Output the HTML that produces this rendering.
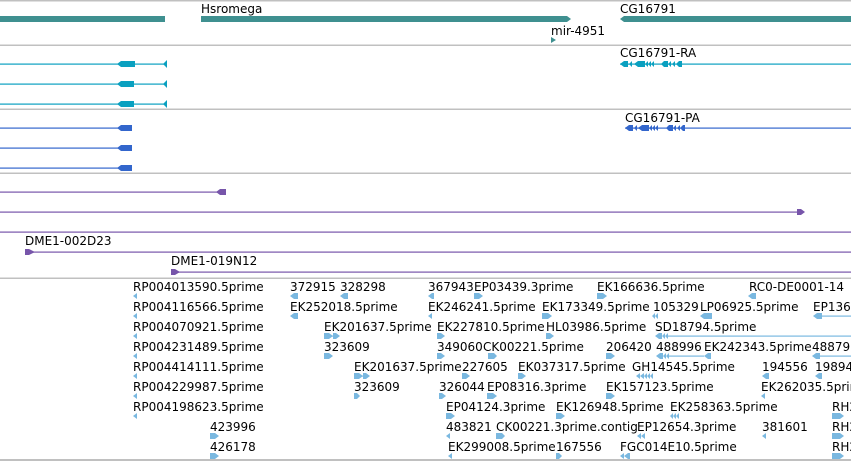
<!DOCTYPE html>
<html><head><meta charset="utf-8"><style>
html,body{margin:0;padding:0;background:#fff;width:851px;height:461px;overflow:hidden}
svg{display:block}
text{font-family:"DejaVu Sans","Liberation Sans",sans-serif;font-size:12px;fill:#000}
.e{fill:#7ab8e0}
</style></head><body>
<svg width="851" height="461" viewBox="0 0 851 461">
<g fill="#c0c0c0">
<rect x="0" y="0" width="851" height="1.5"/>
<rect x="0" y="44.5" width="851" height="1.5"/>
<rect x="0" y="108.5" width="851" height="1.5"/>
<rect x="0" y="172.5" width="851" height="1.5"/>
<rect x="0" y="277.5" width="851" height="1.5"/>
<rect x="0" y="459" width="851" height="2"/>
</g>
<g fill="#3f9090">
<rect x="0" y="16" width="165" height="6"/>
<path d="M201 16H567L571 19L567 22H201Z"/>
<path d="M624 16H851V22H624L620 19Z"/>
<path d="M551 37L556 40L551 43Z"/>
</g>
<text x="201" y="13">Hsromega</text>
<text x="620" y="13">CG16791</text>
<text x="551" y="35">mir-4951</text>
<g fill="#0aa0c0">
<rect x="0" y="63.5" width="167" height="1.2"/><rect x="0" y="83.5" width="167" height="1.2"/><rect x="0" y="103.5" width="167" height="1.2"/>
<path d="M117 64L121 61H135V67H121Z"/><path d="M117 84L121 81H134V87H121Z"/><path d="M117 104L121 101H134V107H121Z"/>
<path d="M163 64L167 60V68Z"/><path d="M163 84L167 80V88Z"/><path d="M163 104L167 100V108Z"/>
<rect x="620" y="63.5" width="231" height="1.2"/>
<path d="M620 64L624 61H628V67H624Z M629 64L632 61V67Z M634 64L638 61H645V67H638Z M645 64L648 61V67Z M648 64L651 61V67Z M651 64L654 61V67Z M661 64L664 61H668V67H664Z M668 64L671 61V67Z M672 64L675 61V67Z M676 64L679 61H682V67H679Z"/>
</g>
<text x="620" y="57">CG16791-RA</text>
<g fill="#3366cc">
<rect x="0" y="127.5" width="132" height="1.2"/><rect x="0" y="147.5" width="132" height="1.2"/><rect x="0" y="167.5" width="132" height="1.2"/>
<path d="M117 128L121 125H132V131H121Z"/><path d="M117 148L121 145H132V151H121Z"/><path d="M117 168L121 165H132V171H121Z"/>
<rect x="625" y="127.5" width="226" height="1.2"/>
<path d="M625 128L629 125H633V131H629Z M634 128L637 125V131Z M638 128L642 125H649V131H642Z M649 128L652 125V131Z M652 128L655 125V131Z M655 128L658 125V131Z M666 128L669 125H673V131H669Z M673 128L676 125V131Z M677 128L680 125V131Z M680 128L683 125H685V131H683Z"/>
</g>
<text x="625" y="122">CG16791-PA</text>
<g fill="#7755aa">
<rect x="0" y="191.5" width="220" height="1.2"/><path d="M216 192L220 189H226V195H220Z"/>
<rect x="0" y="211.5" width="800" height="1.2"/><path d="M797 209H801L805 212L801 215H797Z"/>
<rect x="0" y="231.5" width="851" height="1.2"/>
<rect x="30" y="251.5" width="821" height="1.2"/><path d="M25 249H29L35 252L29 255H25Z"/>
<rect x="176" y="271.5" width="675" height="1.2"/><path d="M171 269H175L180 272L175 275H171Z"/>
</g>
<text x="25" y="245">DME1-002D23</text>
<text x="171" y="265">DME1-019N12</text>
<g>
<text x="133" y="291">RP004013590.5prime</text><text x="290" y="291">372915</text><text x="340" y="291">328298</text><text x="428" y="291">367943</text><text x="474" y="291">EP03439.3prime</text><text x="597" y="291">EK166636.5prime</text><text x="749" y="291">RC0-DE0001-14</text>
<text x="133" y="311">RP004116566.5prime</text><text x="290" y="311">EK252018.5prime</text><text x="428" y="311">EK246241.5prime</text><text x="542" y="311">EK173349.5prime</text><text x="653" y="311">105329</text><text x="700" y="311">LP06925.5prime</text><text x="813" y="311">EP136</text>
<text x="133" y="331">RP004070921.5prime</text><text x="324" y="331">EK201637.5prime</text><text x="437" y="331">EK227810.5prime</text><text x="546" y="331">HL03986.5prime</text><text x="655" y="331">SD18794.5prime</text>
<text x="133" y="351">RP004231489.5prime</text><text x="324" y="351">323609</text><text x="437" y="351">349060</text><text x="483" y="351">CK00221.5prime</text><text x="606" y="351">206420</text><text x="656" y="351">488996</text><text x="704" y="351">EK242343.5prime</text><text x="812" y="351">48879</text>
<text x="133" y="371">RP004414111.5prime</text><text x="354" y="371">EK201637.5prime</text><text x="462" y="371">227605</text><text x="518" y="371">EK037317.5prime</text><text x="632" y="371">GH14545.5prime</text><text x="762" y="371">194556</text><text x="815" y="371">19894</text>
<text x="133" y="391">RP004229987.5prime</text><text x="354" y="391">323609</text><text x="439" y="391">326044</text><text x="487" y="391">EP08316.3prime</text><text x="606" y="391">EK157123.5prime</text><text x="761" y="391">EK262035.5prime</text>
<text x="133" y="411">RP004198623.5prime</text><text x="446" y="411">EP04124.3prime</text><text x="556" y="411">EK126948.5prime</text><text x="670" y="411">EK258363.5prime</text><text x="832" y="411">RH2</text>
<text x="210" y="431">423996</text><text x="446" y="431">483821</text><text x="496" y="431">CK00221.3prime.contig</text><text x="637" y="431">EP12654.3prime</text><text x="762" y="431">381601</text><text x="832" y="431">RH2</text>
<text x="210" y="451">426178</text><text x="448" y="451">EK299008.5prime</text><text x="556" y="451">167556</text><text x="620" y="451">FGC014E10.5prime</text><text x="832" y="451">RH2</text>
</g>
<g class="e">
<path d="M133 296L137 293V299Z"/><path d="M290 296L294 293H298V299H294Z"/><path d="M340 296L344 293H348V299H344Z"/><path d="M428 296L432 293H434V299H432Z"/><path d="M474 293H479L483 296L479 299H474Z"/><path d="M597 293H603L607 296L603 299H597Z"/><path d="M748 296L752 293H756V299H752Z"/>
<path d="M133 316L137 313V319Z"/><path d="M290 316L294 313H298V319H294Z"/><path d="M428 316L432 313V319Z"/><path d="M542 313H548L552 316L548 319H542Z"/><path d="M652 316L655 313V319Z M655 316L658 313V319Z"/><path d="M700 316L704 313H712V319H704Z"/><path d="M813 316L817 313H822V319H817Z"/><rect x="820" y="315.5" width="31" height="1.2"/>
<path d="M133 336L137 333V339Z"/><path d="M324 333H329L333 336L329 339H324Z M333 333H336L340 336L336 339H333Z"/><rect x="329" y="335.5" width="8" height="1.2"/><path d="M437 333H441L445 336L441 339H437Z"/><path d="M546 333H550L554 336L550 339H546Z"/><path d="M655 336L659 333H662V339H659Z M662 336L665 333V339Z M665 336L668 333V339Z"/><rect x="668" y="335.5" width="183" height="1.2"/>
<path d="M133 356L137 353V359Z"/><path d="M324 353H329L333 356L329 359H324Z"/><path d="M437 353H441L445 356L441 359H437Z"/><path d="M488 353H494L497 356L494 359H488Z"/><path d="M606 353H611L615 356L611 359H606Z"/><path d="M656 356L660 353H663V359H660Z M663 356L666 353V359Z M666 356L669 353V359Z"/><rect x="669" y="355.5" width="35" height="1.2"/><path d="M704 356L708 353H711V359H708Z"/><path d="M812 356L816 353H820V359H816Z"/><rect x="820" y="355.5" width="31" height="1.2"/>
<path d="M133 376L137 373V379Z"/><path d="M354 373H359L363 376L359 379H354Z M363 373H366L370 376L366 379H363Z"/><rect x="359" y="375.5" width="8" height="1.2"/><path d="M462 373H466L470 376L466 379H462Z"/><path d="M518 373H522L526 376L522 379H518Z"/><path d="M636 376L640 373V379Z M640 376L644 373V379Z M644 376L647 373V379Z M647 376L650 373V379Z M650 376L653 373V379Z"/><path d="M762 376L766 373H769V379H766Z"/><path d="M815 376L819 373H822V379H819Z"/>
<path d="M133 396L137 393V399Z"/><path d="M354 393H357L360 396L357 399H354Z"/><path d="M439 393H442L446 396L442 399H439Z"/><path d="M487 393H493L497 396L493 399H487Z"/><path d="M606 393H611L615 396L611 399H606Z"/><path d="M761 396L765 393V399Z"/>
<path d="M133 416L137 413V419Z"/><path d="M446 413H451L455 416L451 419H446Z"/><path d="M556 413H561L565 416L561 419H556Z"/><path d="M670 416L673 413V419Z M673 416L676 413V419Z M676 416L679 413V419Z"/><path d="M832 413H840L844 416L840 419H832Z"/>
<path d="M210 433H215L219 436L215 439H210Z"/><path d="M446 436L450 433V439Z"/><path d="M496 433H502L505 436L502 439H496Z"/><path d="M637 436L641 433V439Z M641 436L645 433V439Z"/><path d="M762 436L766 433V439Z"/><path d="M832 433H840L844 436L840 439H832Z"/>
<path d="M210 453H215L219 456L215 459H210Z"/><path d="M448 456L452 453V459Z"/><path d="M556 453H559L562 456L559 459H556Z"/><path d="M620 456L624 453V459Z M624 456L628 453H630V459H628Z"/><path d="M832 453H840L844 456L840 459H832Z"/>
</g>
</svg>
</body></html>
